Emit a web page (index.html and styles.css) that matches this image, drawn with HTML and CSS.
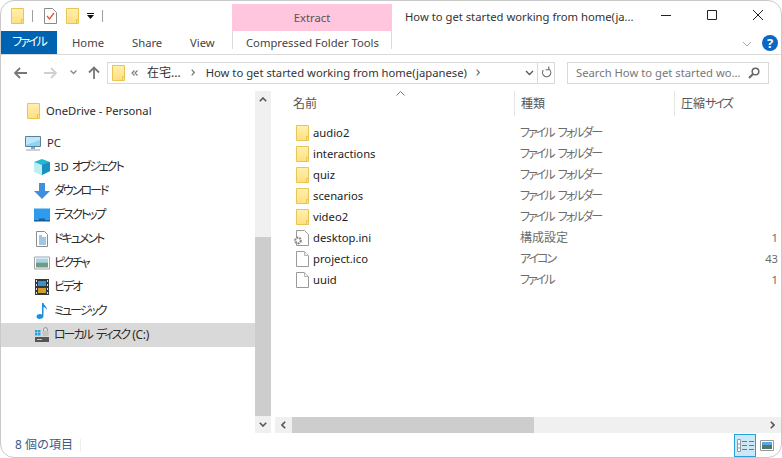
FILE: index.html
```html
<!DOCTYPE html>
<html lang="ja">
<head>
<meta charset="utf-8">
<title>How to get started working from home(japanese)</title>
<link rel="stylesheet" href="styles.css">
</head>
<body>
<svg class="defs" width="0" height="0" aria-hidden="true">
  <defs>
    <linearGradient id="fg" x1="0" y1="0" x2="0" y2="1"><stop offset="0" stop-color="#fff0b0"/><stop offset="1" stop-color="#ffdf80"/></linearGradient>
    <symbol id="folder" viewBox="0 0 13 16">
      <path d="M.5.5h12v15H.5z" fill="url(#fg)" stroke="#e9c653"/>
      <path d="M10.5 15.5v-4h2" fill="none" stroke="#e9c653"/>
    </symbol>
    <symbol id="file" viewBox="0 0 13 16">
      <path d="M.5.5h8l4 4v11H.5z" fill="#fff" stroke="#9a9a9a"/>
      <path d="M8.5.5v4h4" fill="#f0f0f0" stroke="#b5b5b5"/>
    </symbol>
  </defs>
</svg>
<div class="window">
  <header class="titlebar">
    <div class="qat">
      <svg class="i-folder"><use href="#folder"/></svg>
      <span class="qat-sep"></span>
      <svg class="i-check" viewBox="0 0 13 16"><path d="M.5.5h8l4 4v11H.5z" fill="#fff" stroke="#8a8a8a"/><path d="M3 8l2.500 3L10 5" fill="none" stroke="#e2552b" stroke-width="1.300"/></svg>
      <svg class="i-folder i-folder-b"><use href="#folder"/></svg>
      <svg class="i-down" viewBox="0 0 7 6"><path d="M0 0h7v1H0zM0 2h7L3.500 6z" fill="#111"/></svg>
      <span class="qat-sep qat-sep-b"></span>
    </div>
    <div class="extract">Extract</div>
    <div class="title">How to get started working from home(ja...</div>
    <div class="controls">
      <svg class="ctl" viewBox="0 0 46 20"><path d="M18 10.500h10" stroke="#222" fill="none"/></svg>
      <svg class="ctl" viewBox="0 0 46 20"><path d="M18.500 5.500h9v9h-9z" stroke="#222" fill="none"/></svg>
      <svg class="ctl" viewBox="0 0 46 20"><path d="M18 5l10 10M28 5L18 15" stroke="#222" fill="none"/></svg>
    </div>
  </header>
  <nav class="tabs">
    <div class="tab-file"><span class="k">ファイル</span></div>
    <div class="tab tab-home">Home</div>
    <div class="tab tab-share">Share</div>
    <div class="tab tab-view">View</div>
    <div class="tab-tools">Compressed Folder Tools</div>
    <svg class="ribbon-chev" viewBox="0 0 10 6"><path d="M1 1l4 4 4-4" fill="none" stroke="#a8a8a8"/></svg>
    <div class="help">?</div>
  </nav>
  <div class="addr-row">
    <svg class="nav-btn n-back" viewBox="0 0 13 12"><path d="M6 1L1 6l5 5M1 6h12" fill="none" stroke="#777" stroke-width="1.800"/></svg>
    <svg class="nav-btn n-fwd" viewBox="0 0 13 12"><path d="M7 1l5 5-5 5M12 6H0" fill="none" stroke="#d0d0d0" stroke-width="1.800"/></svg>
    <svg class="n-drop" viewBox="0 0 7 5"><path d="M.5.500L3.500 3.500 6.500.5" fill="none" stroke="#888" stroke-width="1.300"/></svg>
    <svg class="nav-btn n-up" viewBox="0 0 12 13"><path d="M1 6.500l5-5 5 5M6 1.500V13" fill="none" stroke="#777" stroke-width="1.800"/></svg>
    <div class="addr">
      <svg class="i-folder i-addr"><use href="#folder"/></svg>
      <svg class="crumb-more" viewBox="0 0 7 6"><path d="M3.500.5L1 3l2.500 2.500M6.500.5L4 3l2.500 2.500" fill="none" stroke="#777" stroke-width="1.100"/></svg>
      <span class="crumb-a j">在宅...</span>
      <svg class="crumb-sep crumb-sep-a" viewBox="0 0 4 7"><path d="M.7.7L3.300 3.500.7 6.300" fill="none" stroke="#777" stroke-width="1.200"/></svg>
      <span class="crumb-b">How to get started working from home(japanese)</span>
      <svg class="crumb-sep crumb-sep-b" viewBox="0 0 4 7"><path d="M.7.7L3.300 3.500.7 6.300" fill="none" stroke="#777" stroke-width="1.200"/></svg>
      <span class="addr-fill"></span>
      <svg class="addr-drop" viewBox="0 0 9 6"><path d="M1 1l3.500 3.500L8 1" fill="none" stroke="#555" stroke-width="1.300"/></svg>
      <span class="addr-refresh"><svg viewBox="0 0 12 14" width="11" height="13"><path d="M9.500 4.500A4.500 4.500 0 1 1 3 3.600M3.500 .5v3.500H7" transform="matrix(-1 0 0 1 12 0)" fill="none" stroke="#6d6d6d" stroke-width="1.300"/></svg></span>
    </div>
    <div class="search">
      <span class="search-text">Search How to get started wo...</span>
      <svg class="search-i" viewBox="0 0 12 12"><circle cx="7.500" cy="4.500" r="3.300" fill="none" stroke="#666" stroke-width="1.500"/><path d="M5 7l-4 4" stroke="#666" stroke-width="2"/></svg>
    </div>
  </div>
  <main class="body">
    <aside class="nav">
      <div class="nav-list">
        <div class="nrow n0"><svg class="i-folder"><use href="#folder"/></svg><span>OneDrive - Personal</span></div>
        <div class="nrow n1 gap-top">
          <svg class="ni-pc" viewBox="0 0 16 15"><path d="M.500 .5h15v10H.5z" fill="#8fd3f7" stroke="#5d7f99"/><path d="M1 1h14v3L1 9z" fill="#bce8fb"/><path d="M6 11h4v2H6zM1 13.500h14v1H1z" fill="#8ea3b3"/></svg><span>PC</span>
        </div>
        <div class="nrow n2"><svg class="ni" viewBox="0 0 16 16"><path d="M8 0l8 3v9l-8 4-8-4V3z" fill="#26b7d2"/><path d="M0 3l8 3v10l-8-4z" fill="#bfeef2"/><path d="M16 3L8 6v10l8-4z" fill="#1a8fc0"/></svg><span>3D <span class="k">オブジェクト</span></span></div>
        <div class="nrow n2"><svg class="ni" viewBox="0 0 16 16"><path d="M5 0h6v8h5l-8 8-8-8h5z" fill="#3f8fdc"/></svg><span class="k">ダウンロード</span></div>
        <div class="nrow n2"><svg class="ni" viewBox="0 0 16 13"><path d="M0 0h16v11H0z" fill="#2d9cef"/><path d="M0 11h5v-1h6v1h5v2H0z" fill="#1a5f97"/></svg><span class="k">デスクトップ</span></div>
        <div class="nrow n2"><svg class="ni" viewBox="0 0 16 16"><path d="M2.500 .5h8l3 3v12h-11z" fill="#fff" stroke="#8b8b8b"/><path d="M5 5h3M5 7h7M5 9h7M5 11h7M5 13h7" stroke="#3e8fc9"/></svg><span class="k">ドキュメント</span></div>
        <div class="nrow n2"><svg class="ni" viewBox="0 0 16 13"><path d="M.500 .5h15v12H.5z" fill="#fff" stroke="#a3a3a3"/><path d="M2 2h12v4H2z" fill="#a6d4ee"/><path d="M2 6h12v5H2z" fill="#6f9a85"/></svg><span class="k">ピクチャ</span></div>
        <div class="nrow n2"><svg class="ni" viewBox="0 0 14 16"><path d="M0 0h14v16H0z" fill="#2f3a40"/><path d="M3 2h8v5H3z" fill="#3f8fc9"/><path d="M3 9h8v5H3z" fill="#d59b2b"/><path d="M1 1h1v2H1zM1 5h1v2H1zM1 9h1v2H1zM1 13h1v2H1zM12 1h1v2h-1zM12 5h1v2h-1zM12 9h1v2h-1zM12 13h1v2h-1z" fill="#ddd"/></svg><span class="k">ビデオ</span></div>
        <div class="nrow n2"><svg class="ni" viewBox="0 0 16 16"><path d="M8 0h1.500c.5 3 4 3.500 3 7-.5-2-2-3-3-3v9c0 2-2 3-4 3s-3-1-3-2.500S4 11 6 11c1 0 1.500.2 2 .5z" fill="#1e8fe0"/></svg><span class="k">ミュージック</span></div>
        <div class="nrow n2 selected"><svg class="ni" viewBox="0 0 16 16"><path d="M1 3h2.500v2.500H1zM4 3h2.500v2.500H4zM1 6h2.500v2.500H1zM4 6h2.500v2.500H4z" fill="#1ea7e8"/><path d="M8.500 4h6v5h-6z" fill="#c4c4c4"/><path d="M9.500 4V2.500a2 2 0 0 1 4 0V4" fill="none" stroke="#999"/><path d="M1 10h14v5H1z" fill="#555"/><path d="M3 12h5v1H3z" fill="#9fe29f"/></svg><span><span class="k">ローカル ディスク</span> <span class="paren">(C:)</span></span></div>
      </div>
    </aside>
    <div class="vscroll">
      <div class="sb-btn"><svg viewBox="0 0 8 5"><path d="M.8 4.200L4 1l3.200 3.200" fill="none" stroke="#555" stroke-width="1.600"/></svg></div>
      <div class="vtrack"><div class="vthumb"></div></div>
      <div class="sb-btn"><svg viewBox="0 0 8 5"><path d="M.8 .8L4 4l3.200-3.200" fill="none" stroke="#555" stroke-width="1.600"/></svg></div>
    </div>
    <section class="files">
      <div class="list-area">
        <div class="thead">
          <div class="th th-name"><span class="j">名前</span><svg class="sort" viewBox="0 0 9 5"><path d="M.5 4.500L4.500 .5l4 4" fill="none" stroke="#777"/></svg></div>
          <div class="th th-type j">種類</div>
          <div class="th th-size"><span class="j">圧縮</span><span class="k">サイズ</span></div>
        </div>
        <div class="rows">
          <div class="row"><div class="c-name"><svg class="i-folder"><use href="#folder"/></svg><span>audio2</span></div><div class="c-type k">ファイル フォルダー</div><div class="c-size"></div></div>
          <div class="row"><div class="c-name"><svg class="i-folder"><use href="#folder"/></svg><span>interactions</span></div><div class="c-type k">ファイル フォルダー</div><div class="c-size"></div></div>
          <div class="row"><div class="c-name"><svg class="i-folder"><use href="#folder"/></svg><span>quiz</span></div><div class="c-type k">ファイル フォルダー</div><div class="c-size"></div></div>
          <div class="row"><div class="c-name"><svg class="i-folder"><use href="#folder"/></svg><span>scenarios</span></div><div class="c-type k">ファイル フォルダー</div><div class="c-size"></div></div>
          <div class="row"><div class="c-name"><svg class="i-folder"><use href="#folder"/></svg><span>video2</span></div><div class="c-type k">ファイル フォルダー</div><div class="c-size"></div></div>
          <div class="row"><div class="c-name"><svg class="i-ini" viewBox="0 0 17 16"><path d="M4.500 .5h8l4 4v11h-12z" fill="#fff" stroke="#9a9a9a"/><circle cx="6" cy="10.500" r="2.800" fill="#fff" stroke="#8b8b8b" stroke-width="2.200" stroke-dasharray="2 .8"/></svg><span>desktop.ini</span></div><div class="c-type j">構成設定</div><div class="c-size">1</div></div>
          <div class="row"><div class="c-name"><svg class="i-folder"><use href="#file"/></svg><span>project.ico</span></div><div class="c-type k">アイコン</div><div class="c-size">43</div></div>
          <div class="row"><div class="c-name"><svg class="i-folder"><use href="#file"/></svg><span>uuid</span></div><div class="c-type k">ファイル</div><div class="c-size">1</div></div>
        </div>
      </div>
      <div class="hscroll">
        <div class="sb-btn-h"><svg viewBox="0 0 5 8"><path d="M4.200 .8L1 4l3.200 3.200" fill="none" stroke="#555" stroke-width="1.600"/></svg></div>
        <div class="hthumb"></div>
        <div class="htrack"></div>
        <div class="sb-btn-h"><svg viewBox="0 0 5 8"><path d="M.8 .8L4 4 .8 7.200" fill="none" stroke="#555" stroke-width="1.600"/></svg></div>
      </div>
    </section>
  </main>
  <footer class="status">
    <span class="count j">8 個の項目</span>
    <span class="status-sep"></span>
    <span class="status-fill"></span>
    <span class="view-details"><svg viewBox="0 0 17 13" width="17" height="13"><path d="M.5.500h3v12h-3z" fill="#fff" stroke="#999"/><path d="M1 5h2M1 9h2" stroke="#999"/><path d="M5 2.500h5M12 2.500h5M5 6.500h5M12 6.500h5M5 10.500h5M12 10.500h5" stroke="#777"/></svg></span>
    <span class="view-large"><svg viewBox="0 0 14 11" width="14" height="11"><path d="M.5.500h13v10H.5z" fill="#fff" stroke="#999"/><path d="M2 2h10v3H2z" fill="#5aa6e6"/><path d="M2 5h10v4H2z" fill="#4f7866"/></svg></span>
  </footer>
</div>
</body>
</html>
```

FILE: styles.css
```css
* { box-sizing: border-box; }
html, body { margin: 0; padding: 0; background: #fff; }
body {
  width: 782px;
  height: 458px;
  overflow: hidden;
  font: 11.25px/16px "Noto Sans", "Noto Sans CJK JP", sans-serif;
  color: #2b2b2b;
}
.j { font-size: 12px; }
.k { font-size: 12px; font-feature-settings: "palt"; letter-spacing: -2px; word-spacing: 3px; }
.paren { font-size: 12px; letter-spacing: -.3px; }
.defs { display: block; height: 0; }
.window {
  width: 782px;
  height: 458px;
  border: 1px solid #c9c9c9;
  border-radius: 14px;
  overflow: hidden;
  display: flex;
  flex-direction: column;
  background: #fff;
}
svg { display: block; flex: none; }
.i-folder { width: 13px; height: 16px; }

/* title bar */
.titlebar { height: 30px; display: flex; flex: none; }
.qat { width: 231px; flex: none; display: flex; align-items: center; padding: 0 0 0 10px; }
.qat-sep { width: 1px; height: 12px; background: #a0a0a0; margin-left: 8px; }
.i-check { width: 13px; height: 16px; margin-left: 11px; }
.i-folder-b { margin-left: 9px; }
.i-down { width: 7px; height: 6px; margin-left: 8px; }
.qat-sep-b { margin-left: 8px; }
.extract {
  width: 160px;
  flex: none;
  height: 27px;
  margin-top: 3px;
  background: #ffc6de;
  color: #555;
  text-align: center;
  line-height: 28px;
}
.title { margin-left: 13px; flex: none; line-height: 32px; white-space: nowrap; color: #333; }
.controls { display: flex; margin-left: auto; align-items: flex-start; padding-top: 4px; }
.ctl { width: 46px; height: 20px; }

/* tabs */
.tabs { height: 24px; flex: none; display: flex; border-bottom: 1px solid #dadada; }
.tab-file {
  width: 56px;
  height: 23px;
  background: #0063b1;
  color: #fff;
  text-align: center;
  line-height: 22px;
}
.tab { line-height: 23px; color: #444; }
.tab-home { margin-left: 15px; width: 60px; }
.tab-share { width: 58px; }
.tab-view { width: 42px; }
.tab-tools {
  width: 160px;
  height: 18px;
  border: 1px solid #dadada;
  border-width: 0 1px;
  padding-left: 13px;
  line-height: 23px;
  color: #444;
  white-space: nowrap;
}
.ribbon-chev { width: 10px; height: 6px; margin: 10px 0 0 350px; }
.help {
  width: 16px;
  height: 16px;
  margin: 4px 0 0 10px;
  border-radius: 50%;
  background: #0a67c4;
  color: #fff;
  font-weight: 700;
  font-size: 13px;
  line-height: 16px;
  text-align: center;
}

/* address */
.addr-row { height: 35px; flex: none; display: flex; align-items: center; }
.nav-btn { width: 13px; height: 12px; }
.n-back { margin-left: 13px; }
.n-fwd { margin-left: 17px; }
.n-drop { width: 7px; height: 5px; margin-left: 13px; }
.n-up { width: 12px; height: 13px; margin-left: 11px; }
.addr {
  width: 448px;
  height: 22px;
  margin-left: 7px;
  border: 1px solid #d9d9d9;
  display: flex;
  align-items: center;
  color: #333;
  white-space: nowrap;
}
.i-addr { margin-left: 4px; }
.crumb-more { width: 7px; height: 6px; margin-left: 6px; }
.crumb-a { margin-left: 9px; }
.crumb-sep { width: 4px; height: 7px; }
.crumb-sep-a { margin-left: 10px; }
.crumb-sep-b { margin-left: 9px; }
.crumb-b { margin-left: 11px; }
.addr-fill { flex: 1; }
.addr-drop { width: 9px; height: 6px; margin-right: 3px; }
.addr-refresh {
  width: 17px;
  height: 20px;
  border-left: 1px solid #d9d9d9;
  display: flex;
  align-items: center;
  justify-content: center;
}
.search {
  width: 202px;
  height: 22px;
  margin-left: 12px;
  border: 1px solid #d9d9d9;
  padding: 0 8px;
  display: flex;
  align-items: center;
  justify-content: space-between;
  color: #777;
  white-space: nowrap;
}
.search-i { width: 12px; height: 12px; }

/* body */
.body { flex: 1; min-height: 0; display: flex; }
.nav { width: 254px; flex: none; padding-top: 9px; }
.nrow { height: 24px; display: flex; align-items: center; white-space: nowrap; }
.n0 { padding-left: 26px; gap: 6px; }
.n1 { padding-left: 24px; gap: 6px; }
.n2 { padding-left: 33px; gap: 4px; }
.gap-top { margin-top: 8px; }
.ni { width: 16px; height: 16px; }
.ni-pc { width: 16px; height: 15px; }
.selected { background: #d9d9d9; }

.vscroll { width: 16px; flex: none; display: flex; flex-direction: column; background: #f0f0f0; margin-top: 1px; }
.sb-btn { height: 17px; flex: none; display: flex; align-items: center; justify-content: center; }
.sb-btn svg { width: 8px; height: 5px; }
.vtrack { flex: 1; display: flex; flex-direction: column; justify-content: flex-end; }
.vthumb { height: 179px; background: #cdcdcd; }

.files { flex: 1; min-width: 0; display: flex; flex-direction: column; padding-left: 4px; }
.list-area { flex: 1; min-height: 0; }
.thead { height: 27px; display: flex; padding-top: 1px; }
.th { height: 25px; line-height: 25px; color: #555; white-space: nowrap; }
.th-name { width: 239px; padding-left: 18px; display: flex; position: relative; }
.th-type { width: 160px; border-left: 1px solid #e5e5e5; padding-left: 6px; }
.th-size { border-left: 1px solid #e5e5e5; padding-left: 6px; }
.sort { width: 9px; height: 5px; position: absolute; left: 121px; top: 0; }
.rows { padding-top: 5px; }
.row { height: 21px; display: flex; align-items: center; white-space: nowrap; }
.c-name { width: 240px; flex: none; display: flex; align-items: center; padding-left: 21px; gap: 4px; color: #222; }
.c-name .i-ini { width: 17px; height: 16px; margin-left: -4px; }
.c-type { width: 160px; flex: none; padding-left: 5px; color: #6d6d6d; }
.c-size { flex: 1; text-align: right; color: #6d6d6d; padding-right: 3px; }

.hscroll { height: 16px; flex: none; display: flex; background: #f0f0f0; }
.sb-btn-h { width: 17px; flex: none; display: flex; align-items: center; justify-content: center; }
.sb-btn-h svg { width: 5px; height: 8px; }
.hthumb { width: 242px; background: #cdcdcd; }
.htrack { flex: 1; }

/* status */
.status { height: 24px; flex: none; display: flex; align-items: center; padding-right: 7px; color: #3a5a8c; }
.count { margin-left: 14px; width: 65px; white-space: nowrap; }
.status-sep { width: 1px; height: 13px; background: #eee; }
.status-fill { flex: 1; }
.view-details {
  width: 22px;
  height: 23px;
  background: #cce8f6;
  border: 1px solid #26a0da;
  display: flex;
  align-items: center;
  justify-content: center;
}
.view-large { margin-left: 3px; width: 15px; display: flex; justify-content: center; }
```
